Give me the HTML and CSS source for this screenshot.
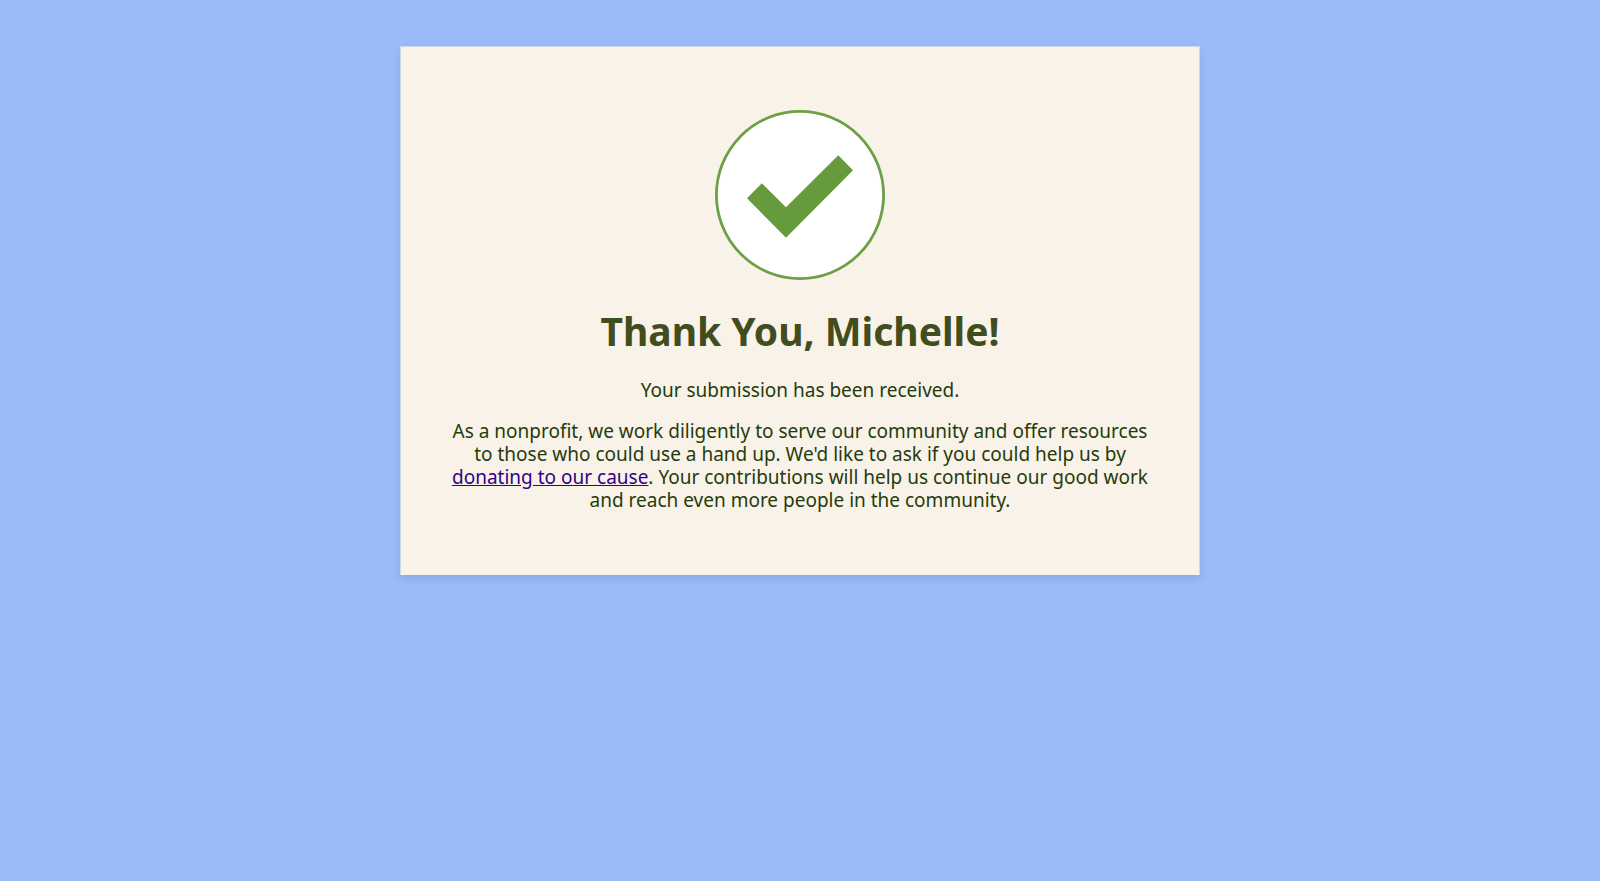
FILE: index.html
```html
<!DOCTYPE html>
<html lang="en">
<head>
    <meta charset="UTF-8">
    <meta name="viewport" content="width=device-width, initial-scale=1.0">
    <title>Thank You</title>
    <link rel="stylesheet" href="styles.css">
</head>
<body>
    <main class="card">
        <svg class="check-icon" viewBox="0 0 170 170" aria-hidden="true">
            <circle cx="85" cy="85" r="83.6" fill="#fff" stroke="#6ba044" stroke-width="2.8"/>
            <path d="M32 88.2 46.8 73.3 71 97.3 123.3 45.3 138 60.2 71 127.8Z" fill="#659b3c"/>
        </svg>
        <h1>Thank You, Michelle!</h1>
        <p>Your submission has been received.</p>
        <p>As a nonprofit, we work diligently to serve our community and offer resources to those who could use a hand up. We'd like to ask if you could help us by <a href="#donate">donating to our cause</a>. Your contributions will help us continue our good work and reach even more people in the community.</p>
    </main>
</body>
</html>
```
FILE: styles.css
```css
body {
    margin: 0;
    background: #99bbf8;
    color: #243c0c;
    font-family: "Lucida Sans", "Lucida Grande", "Noto Sans", sans-serif;
    font-size: 19px;
    line-height: 23px;
}

/* Message card */
.card {
    box-sizing: border-box;
    width: 50%;
    margin: 46px auto;
    padding: 63px 40px;
    background: #f9f2e8;
    border: 1px solid #cfd7ec;
    border-bottom: none;
    box-shadow: 0 4px 8px rgba(0, 0, 0, 0.1);
    text-align: center;
}

.check-icon {
    display: block;
    width: 170px;
    height: 170px;
    margin: 0 auto;
}

h1 {
    margin: 27px 0 24px;
    color: #414d1d;
    font-size: 39px;
    font-weight: 700;
    line-height: 48px;
}

p {
    margin: 18px 0 0;
}

a {
    color: #330088;
}
```
